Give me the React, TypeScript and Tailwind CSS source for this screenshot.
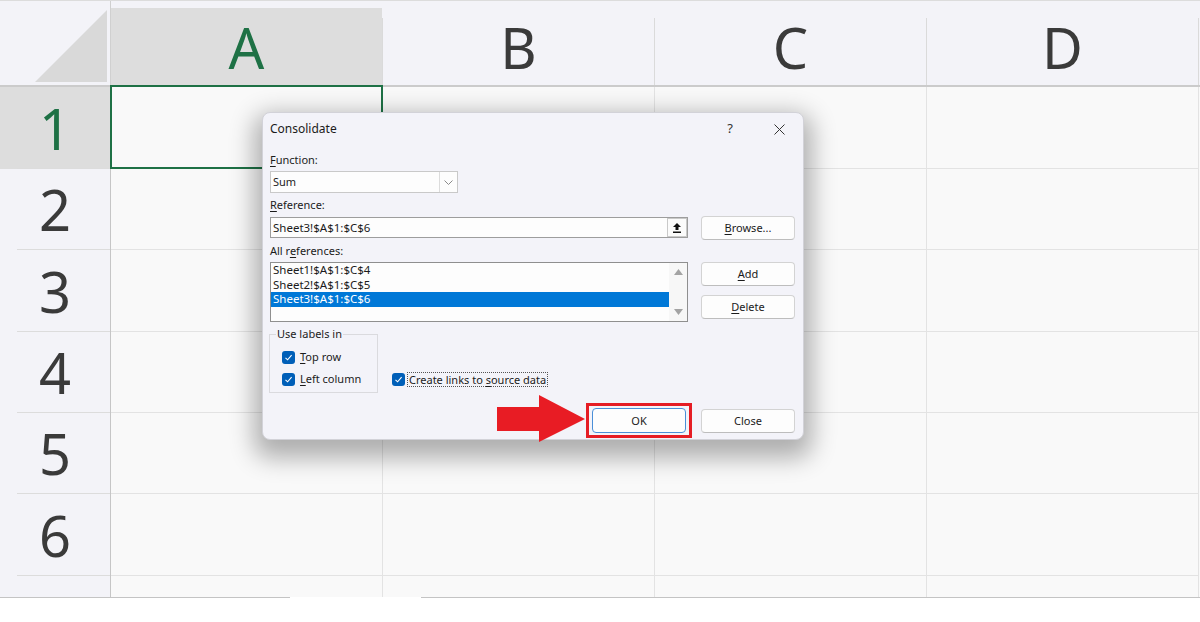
import { ReactNode } from 'react';

const ROWS = [
  { n: '1', h: 'h-[82px]', sel: true },
  { n: '2', h: 'h-[81px]', sel: false },
  { n: '3', h: 'h-[82px]', sel: false },
  { n: '4', h: 'h-[81px]', sel: false },
  { n: '5', h: 'h-[81px]', sel: false },
  { n: '6', h: 'h-[82px]', sel: false },
];

const COLS = ['A', 'B', 'C', 'D'];

function Key({ children }: { children: ReactNode }) {
  return <span className="underline underline-offset-2 decoration-[1px]">{children}</span>;
}

function Check() {
  return (
    <span className="w-[13px] h-[13px] rounded-[3px] bg-[#005fb8] flex items-center justify-center shrink-0">
      <svg width="9" height="9" viewBox="0 0 9 9">
        <path d="M1.5 4.8 L3.6 6.8 L7.6 2.2" fill="none" stroke="#fff" strokeWidth="1.1" />
      </svg>
    </span>
  );
}

function Btn({ children, primary }: { children: ReactNode; primary?: boolean }) {
  return (
    <button
      className={
        primary
          ? 'w-[94px] h-[25px] rounded-[4px] bg-[#fdfdfd] border border-[#4a8fd8] text-[11px] text-[#1b1b1b]'
          : 'w-[94px] h-[24px] rounded-[4px] bg-[#fdfdfd] border border-[#d3d3d3] border-b-[#bdbdbd] text-[11px] text-[#1b1b1b]'
      }
    >
      {children}
    </button>
  );
}

function Dialog() {
  return (
    <div className="absolute left-[262px] top-[112px] w-[542px] h-[328px] rounded-[8px] bg-[#f3f3f9] border border-[#d2d2d8] shadow-[0_10px_24px_8px_rgba(0,0,0,0.3)] font-['Noto_Sans',sans-serif] text-[#1b1b1b] overflow-hidden">
      <div className="h-[32px] flex items-center pl-[7px] pr-[18px]">
        <span className="text-[12px]">Consolidate</span>
        <span className="ml-auto text-[13px] text-[#333] mr-[41px]">?</span>
        <svg width="11" height="11" viewBox="0 0 11 11">
          <path d="M0.5 0.5 L10.5 10.5 M10.5 0.5 L0.5 10.5" stroke="#333" strokeWidth="1" />
        </svg>
      </div>
      <div className="pl-[7px] pr-[8px] text-[11px] leading-[16px]">
        <div className="mt-[7px] h-[16px]">
          <Key>F</Key>unction:
        </div>
        <div className="mt-[3px] w-[188px] h-[22px] bg-[#fdfdfd] border border-[#c9c9c9] flex items-center">
          <span className="pl-[2px] flex-1">Sum</span>
          <span className="w-[18px] h-full border-l border-[#dcdcdc] flex items-center justify-center">
            <svg width="9" height="5" viewBox="0 0 9 5">
              <path d="M0.5 0.5 L4.5 4.5 L8.5 0.5" fill="none" stroke="#8a8a8a" strokeWidth="1" />
            </svg>
          </span>
        </div>
        <div className="mt-[4px] h-[16px]">
          <Key>R</Key>eference:
        </div>
        <div className="mt-[3px] h-[23px] flex items-center gap-[13px]">
          <div className="w-[418px] h-[21px] bg-[#fdfdfd] border border-[#9d9d9d] flex items-center">
            <span className="pl-[2px] flex-1 text-[11.5px]">Sheet3!$A$1:$C$6</span>
            <span className="w-[20px] h-[19px] border border-[#c9c9c9] bg-[#fbfbfb] flex items-center justify-center">
              <svg width="8" height="10" viewBox="0 0 8 10">
                <path d="M4 0 L8 4 L5.5 4 L5.5 7 L2.5 7 L2.5 4 L0 4 Z" fill="#111" />
                <rect x="0" y="8.5" width="8" height="1.5" fill="#111" />
              </svg>
            </span>
          </div>
          <Btn>
            <Key>B</Key>rowse...
          </Btn>
        </div>
        <div className="mt-[4px] h-[16px]">
          All r<Key>e</Key>ferences:
        </div>
        <div className="mt-[3px] flex gap-[13px]">
          <div className="w-[418px] h-[60px] bg-[#fdfdfd] border border-[#8f8f8f] flex">
            <div className="flex-1 flex flex-col leading-[14.5px] text-[11.5px]">
              <div className="h-[14.5px] pl-[2px]">Sheet1!$A$1:$C$4</div>
              <div className="h-[14.5px] pl-[2px]">Sheet2!$A$1:$C$5</div>
              <div className="h-[14.5px] pl-[2px] bg-[#0078d7] text-white">Sheet3!$A$1:$C$6</div>
            </div>
            <div className="w-[18px] flex flex-col items-center justify-between py-[6px] bg-[#f7f7f7]">
              <svg width="9" height="6" viewBox="0 0 9 6">
                <path d="M4.5 0 L9 6 L0 6 Z" fill="#a3a3a3" />
              </svg>
              <svg width="9" height="6" viewBox="0 0 9 6">
                <path d="M0 0 L9 0 L4.5 6 Z" fill="#a3a3a3" />
              </svg>
            </div>
          </div>
          <div className="flex flex-col gap-[9px]">
            <Btn>
              <Key>A</Key>dd
            </Btn>
            <Btn>
              <Key>D</Key>elete
            </Btn>
          </div>
        </div>
        <div className="mt-[5px] flex items-end">
          <fieldset className="-ml-[1px] w-[109px] border border-[#dadade] px-[12px] pb-[6px] pt-[9px]">
            <legend className="-ml-[6px] px-[1px] leading-[14px]">Use labels in</legend>
            <div className="flex flex-col gap-[8px]">
              <div className="h-[14px] flex items-center gap-[5px]">
                <Check />
                <span>
                  <Key>T</Key>op row
                </span>
              </div>
              <div className="h-[14px] flex items-center gap-[5px]">
                <Check />
                <span>
                  <Key>L</Key>eft column
                </span>
              </div>
            </div>
          </fieldset>
          <div className="ml-[14px] mb-[6px] h-[16px] flex items-center gap-[2px]">
            <Check />
            <span className="border border-dotted border-[#555] px-[1px] leading-[13px]">
              Create links to <Key>s</Key>ource data
            </span>
          </div>
        </div>
        <div className="mt-[10px] flex justify-end items-center gap-[9px]">
          <div className="border-[3px] border-[#e51c24] px-[3px] py-[2px]">
            <Btn primary>OK</Btn>
          </div>
          <Btn>Close</Btn>
        </div>
      </div>
    </div>
  );
}

export default function App() {
  return (
    <div className="relative w-[1200px] h-[622px] bg-white overflow-hidden font-['Noto_Sans',sans-serif]">
      <div className="border-t border-[#dcdcdc] bg-[#f9f9f9]">
        {/* column headers */}
        <div className="h-[86px] flex bg-[#f3f3f8] border-b-2 border-[#cbcbcb]">
          <div className="w-[111px] flex items-end pb-[3px] pr-[3px] justify-end border-r border-[#d0d0d0]">
            <svg width="72" height="72" viewBox="0 0 72 72">
              <path d="M72 0 L72 72 L0 72 Z" fill="#d9d9d9" />
            </svg>
          </div>
          {COLS.map((c) => (
            <div key={c} className="w-[272px] flex">
              <div
                className={
                  c === 'A'
                    ? 'flex-1 mt-[7px] bg-[#dddddd] flex items-center justify-center text-[56px] text-[#1e7145] leading-none'
                    : 'flex-1 mt-[7px] flex items-center justify-center text-[56px] text-[#3a3a3a] leading-none'
                }
              >
                {c}
              </div>
              <div className="w-px mt-[17px] bg-[#dadada]" />
            </div>
          ))}
        </div>
        {/* rows */}
        {ROWS.map((r) => (
          <div key={r.n} className={`flex ${r.h}`}>
            <div
              className={
                r.sel
                  ? 'w-[111px] flex flex-col bg-[#dddddd] border-r border-[#c6c6c6]'
                  : 'w-[111px] flex flex-col bg-[#f3f3f8] border-r border-[#c6c6c6]'
              }
            >
              <div
                className={
                  r.sel
                    ? 'flex-1 flex items-center justify-center text-[56px] leading-none text-[#1e7145]'
                    : 'flex-1 flex items-center justify-center text-[56px] leading-none text-[#3a3a3a]'
                }
              >
                {r.n}
              </div>
              <div className="ml-[17px] h-px bg-[#dcdcdc]" />
            </div>
            {COLS.map((c) => (
              <div key={c} className="relative w-[272px] border-r border-b border-[#e3e3e3]">
                {r.sel && c === 'A' && (
                  <div className="absolute -left-[1px] -top-[2px] -right-[1px] -bottom-[1px] border-2 border-[#1e7145]" />
                )}
              </div>
            ))}
          </div>
        ))}
        <div className="flex h-[21px]">
          <div className="w-[111px] bg-[#f3f3f8] border-r border-[#c6c6c6]" />
          {COLS.map((c) => (
            <div key={c} className="w-[272px] border-r border-[#e3e3e3]" />
          ))}
        </div>
      </div>
      <div className="flex h-px">
        <div className="w-[290px] bg-[#c4c4c4]" />
        <div className="w-[131px]" />
        <div className="flex-1 bg-[#c4c4c4]" />
      </div>

      <Dialog />

      <svg className="absolute left-[497px] top-[395px]" width="89" height="48" viewBox="0 0 89 48">
        <path d="M0 12 L42 12 L42 0 L88 24 L42 47 L42 36 L0 36 Z" fill="#e81c24" />
      </svg>
    </div>
  );
}
